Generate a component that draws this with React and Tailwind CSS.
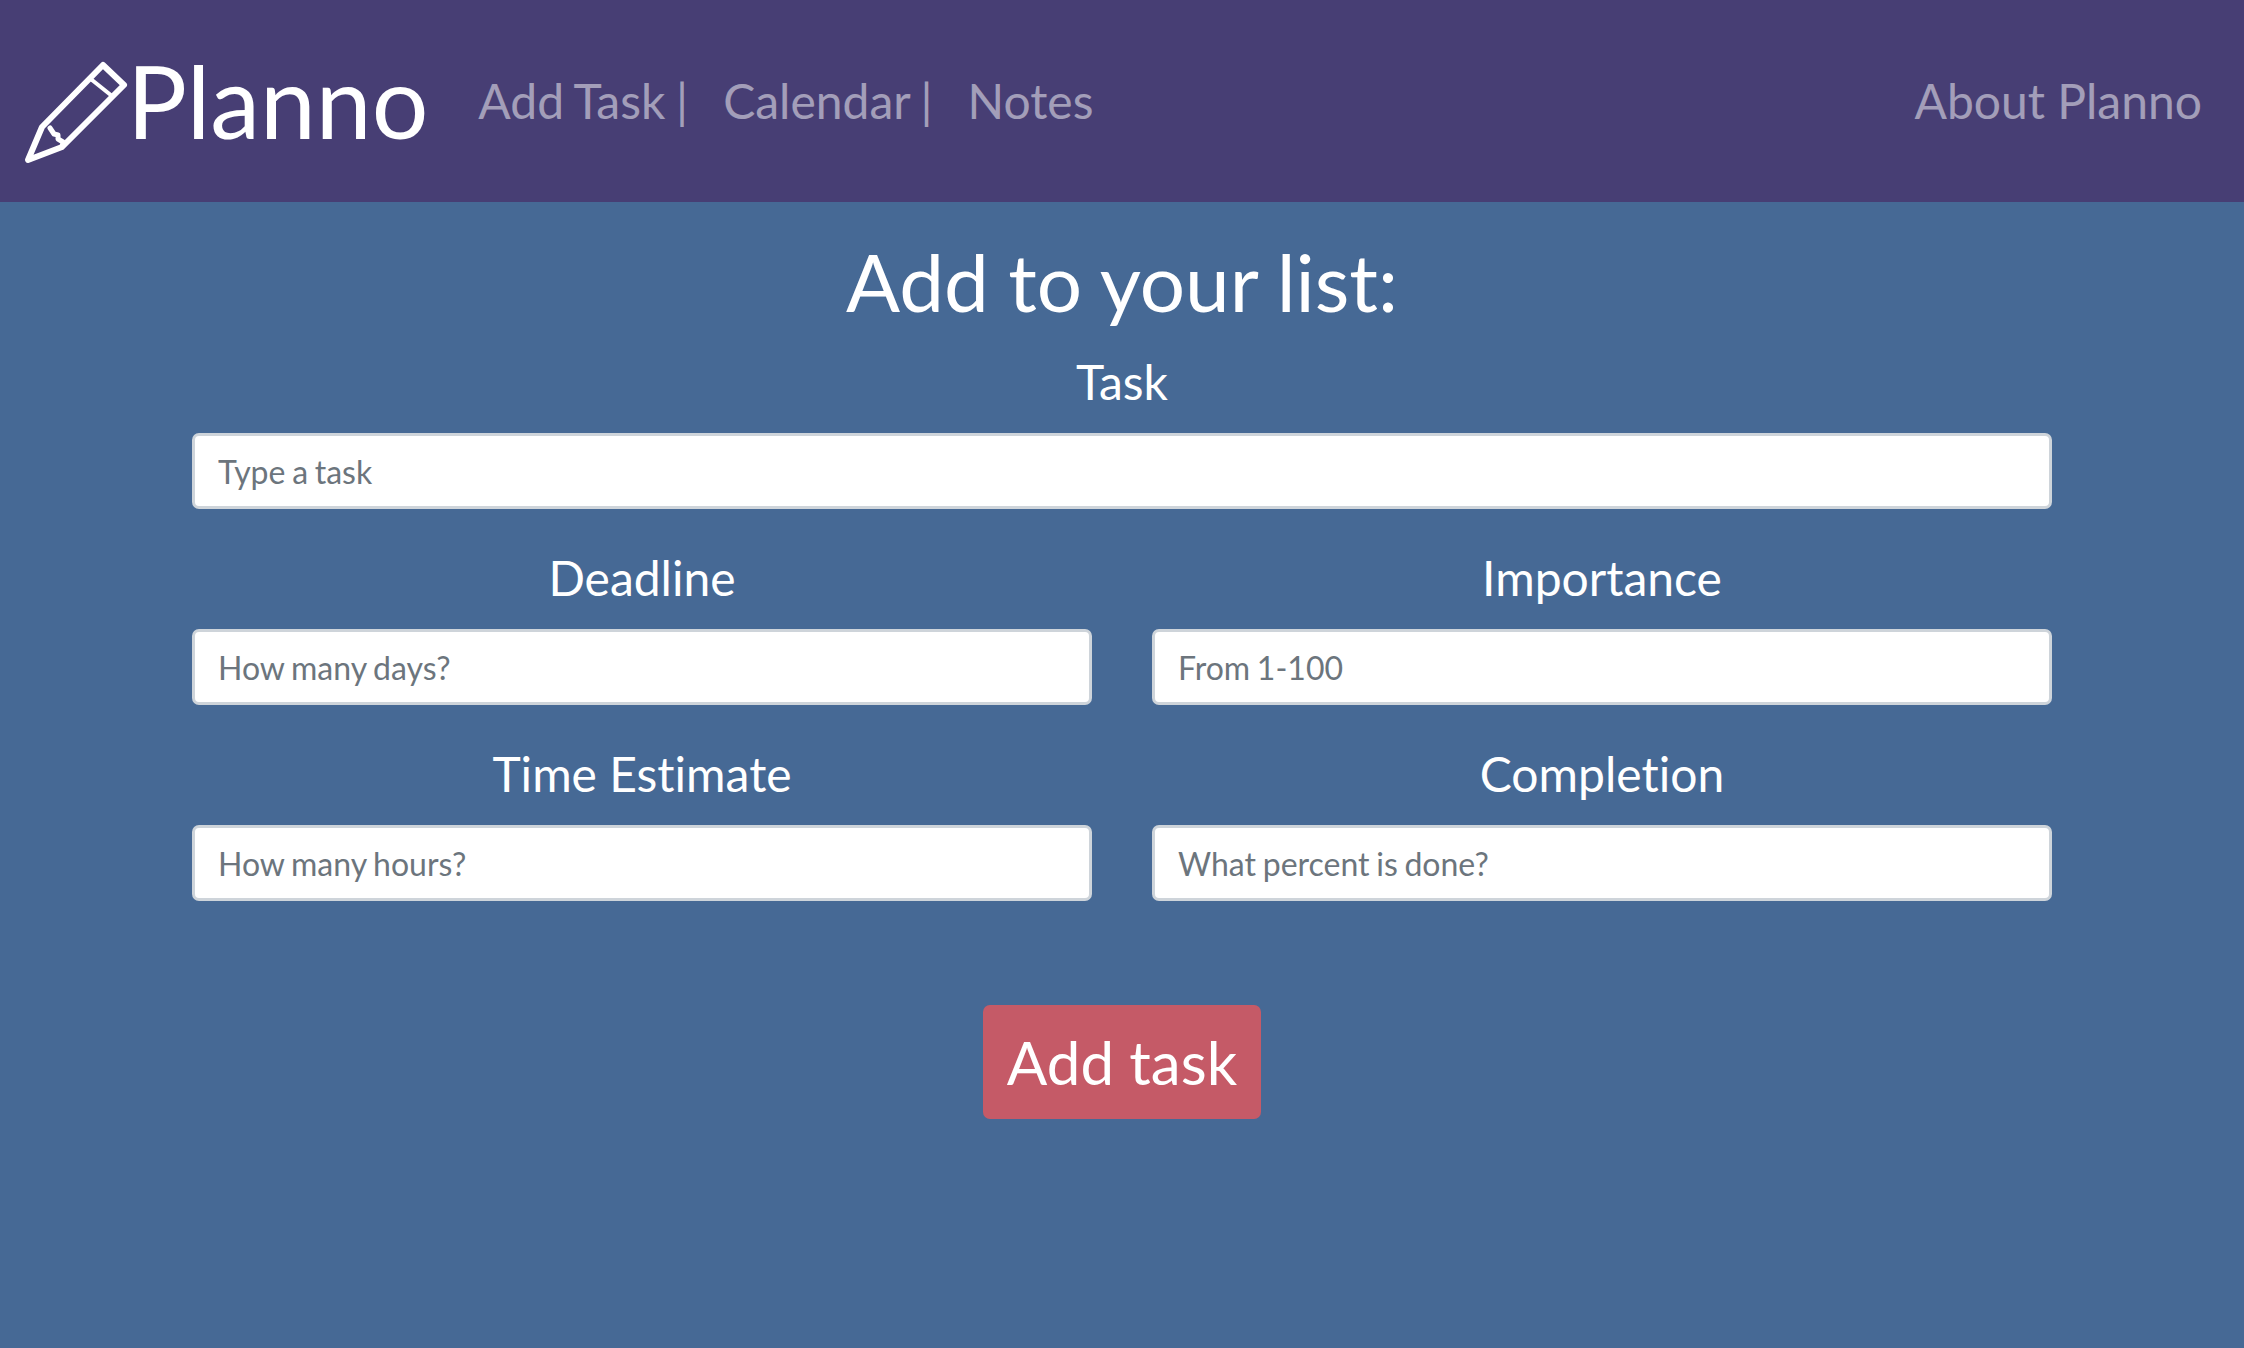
import React from 'react';

function PencilLogo() {
    // coordinates are page pixels minus (20, 55)
    return (
        <svg viewBox="0 0 110 115" className="w-[110px] h-[115px] shrink-0 mt-[24px]" fill="none" stroke="white" strokeWidth="6" strokeLinejoin="round" strokeLinecap="round">
            <path d="M8 105 L22 72 L83 10 L104 30 L42 92 Z" />
            <path d="M72 25 L92 41" strokeWidth="4" />
            <path d="M30 73 L34 79 L38 80 L38 84 L43 87 L42 92" strokeWidth="5" />
        </svg>
    );
}

function Field({ label, placeholder }) {
    return (
        <div className="flex flex-col flex-1 min-w-0">
            <label className="h-[102px] flex items-center justify-center text-[48px] leading-none text-white">{label}</label>
            <input
                type="text"
                placeholder={placeholder}
                className="w-full h-[76px] bg-white border-[3px] border-[#ced4da] rounded-[7px] px-[23px] text-[32px] [word-spacing:-1.5px] text-[#495057] placeholder:text-[#6c757d] outline-none [font-variant-ligatures:none]"
            />
        </div>
    );
}

export default function App() {
    return (
        <div className="min-h-[1348px] bg-[#466995] font-['Lato','Noto_Sans',sans-serif] [font-variant-ligatures:none] flex flex-col">
            <nav className="h-[202px] bg-[#473e74] flex items-center pl-[20px] pr-[42px]">
                <div className="flex items-center -mt-[2px]">
                    <PencilLogo />
                    <span className="text-[100px] leading-none text-white -ml-[3px]">Planno</span>
                </div>
                <div className="flex items-center ml-[50px] text-[48px] leading-none text-white/50 [word-spacing:-1.5px]">
                    <a className="mr-[35px]">Add Task |</a>
                    <a className="mr-[35px]">Calendar |</a>
                    <a>Notes</a>
                </div>
                <a className="ml-auto text-[48px] leading-none text-white/50">About Planno</a>
            </nav>

            <main className="w-[1860px] mx-auto flex flex-col">
                <h1 className="h-[129px] pt-[28px] flex items-center justify-center text-[80px] leading-none text-white [word-spacing:-1px]">Add to your list:</h1>
                <Field label="Task" placeholder="Type a task" />
                <div className="flex gap-[60px] mt-[18px]">
                    <Field label="Deadline" placeholder="How many days?" />
                    <Field label="Importance" placeholder="From 1-100" />
                </div>
                <div className="flex gap-[60px] mt-[18px]">
                    <Field label="Time Estimate" placeholder="How many hours?" />
                    <Field label="Completion" placeholder="What percent is done?" />
                </div>
                <button className="self-center mt-[104px] w-[278px] h-[114px] bg-[#c55a67] rounded-[7px] text-[60px] leading-none text-white">Add task</button>
            </main>
        </div>
    );
}
